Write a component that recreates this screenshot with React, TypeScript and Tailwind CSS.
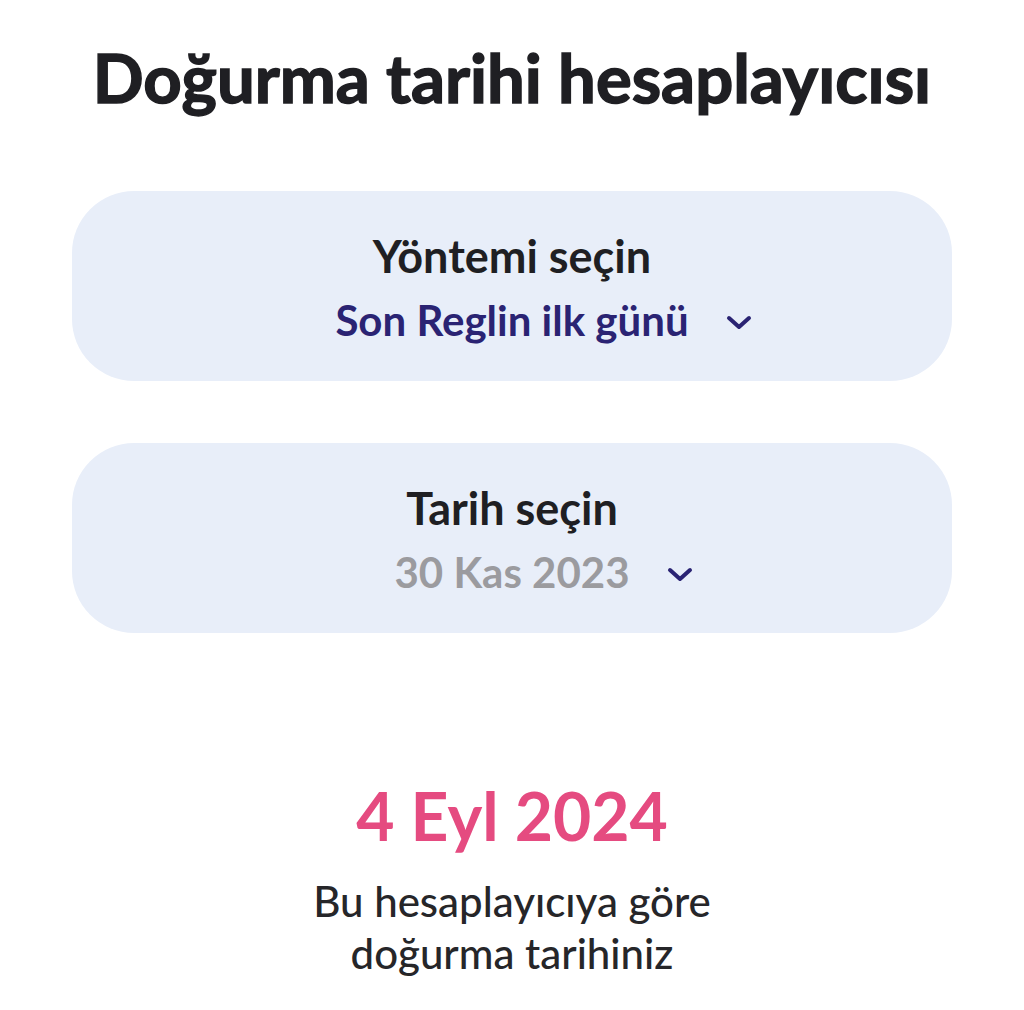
import { useState } from "react";

function Chevron() {
  return (
    <svg width="26" height="16" viewBox="0 0 26 16" className="absolute left-full top-[18px] ml-[37px]">
      <polyline points="3,3 13,12 23,3" fill="none" stroke="#2a2373" strokeWidth="4" strokeLinecap="round" strokeLinejoin="round" />
    </svg>
  );
}

interface SelectCardProps {
  label: string;
  value: string;
  muted?: boolean;
}

function SelectCard({ label, value, muted }: SelectCardProps) {
  return (
    <button className="w-full h-[190px] rounded-[62px] bg-[#e8eef9] flex flex-col items-center justify-center">
      <span className="text-[45px] leading-[52px] font-bold text-[#1f1f23]">{label}</span>
      <span className={`relative mt-[15px] text-[42px] leading-[46px] font-bold ${muted ? "text-[#9b9b9f]" : "text-[#2a2373]"}`}>
        {value}
        <Chevron />
      </span>
    </button>
  );
}

export default function App() {
  const [method] = useState("Son Reglin ilk günü");
  const [date] = useState("30 Kas 2023");

  return (
    <div className="w-[1024px] h-[1010px] bg-white font-['Lato',sans-serif] flex flex-col items-center pt-[37px]">
      <h1 className="text-[67px] leading-[80px] font-bold text-[#1f1f23] [-webkit-text-stroke:1.5px_#1f1f23]">Doğurma tarihi hesaplayıcısı</h1>

      <div className="w-[880px] flex flex-col gap-[62px] mt-[74px]">
        <SelectCard label="Yöntemi seçin" value={method} />
        <SelectCard label="Tarih seçin" value={date} muted />
      </div>

      <div className="flex flex-col items-center mt-[145px]">
        <span className="text-[66px] leading-[76px] font-bold text-[#e54b80]">4 Eyl 2024</span>
        <p className="text-[42px] leading-[52px] font-medium text-[#262629] text-center mt-[21px]">
          Bu hesaplayıcıya göre
          <br />
          doğurma tarihiniz
        </p>
      </div>
    </div>
  );
}
